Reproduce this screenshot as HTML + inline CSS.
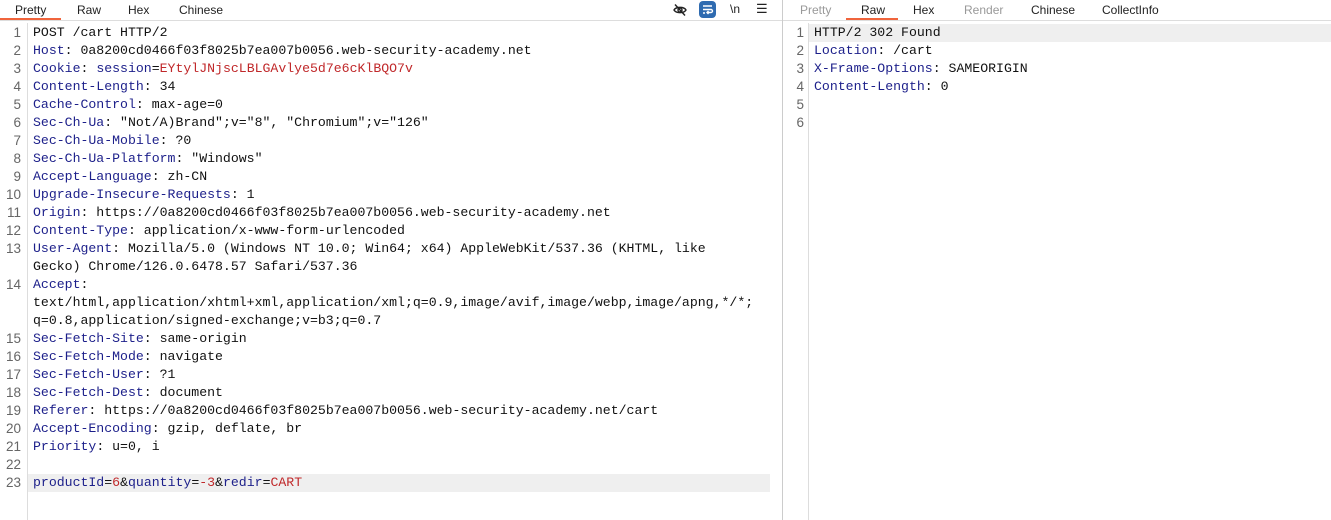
<!DOCTYPE html>
<html><head><meta charset="utf-8"><style>
*{margin:0;padding:0;box-sizing:border-box}
body{width:1331px;height:520px;background:#fff;position:relative;overflow:hidden;font-family:"Liberation Sans",sans-serif}
.tabs{position:absolute;top:0;height:21px;border-bottom:1px solid #ddd;font-size:12px}
.tab{position:absolute;top:3px;color:#222}
.tab.g{color:#999}
.ul{position:absolute;top:18px;height:2px;background:#f0643c}
.code{position:absolute;font-family:"Liberation Mono",monospace;font-size:13.2px;line-height:18px;color:#111;white-space:pre}
.k{color:#1c1f8a}.r{color:#c0282a}
.num{position:absolute;font-family:"Liberation Sans",sans-serif;font-size:13.5px;color:#666;line-height:18px;text-align:right}
.vl{position:absolute;width:1px;background:#ddd}
</style></head><body>
<div class="tabs" style="left:0;width:782px">
<span class="tab" style="left:15px">Pretty</span>
<span class="tab" style="left:77px">Raw</span>
<span class="tab" style="left:128px">Hex</span>
<span class="tab" style="left:179px">Chinese</span>
<div class="ul" style="left:0;width:61px"></div>
<svg style="position:absolute;left:673px;top:3px" width="14" height="14" viewBox="0 0 14 14" fill="none" stroke="#222" stroke-width="1.4"><path d="M1 7c2-3.5 10-3.5 12 0c-2 3.5-10 3.5-12 0z"/><circle cx="7" cy="7" r="2"/><path d="M2 1.5l10 11"/></svg>
<div style="position:absolute;left:699px;top:1px;width:17px;height:17px;border-radius:4px;background:#2f6bb0"><svg width="17" height="17" viewBox="0 0 17 17" fill="none" stroke="#fff" stroke-width="1.4"><path d="M4 5h9M4 8.5h8a1.5 1.5 0 0 1 0 3H8M9.5 10l-1.5 1.5 1.5 1.5M4 12h2"/></svg></div>
<span class="tab" style="left:730px;top:2px;font-size:12px">\n</span>
<span class="tab" style="left:756px;top:1px;font-size:13px">☰</span>
</div>
<div class="vl" style="left:782px;top:0;height:520px;background:#ccc"></div>
<div class="tabs" style="left:783px;width:548px">
<span class="tab g" style="left:17px">Pretty</span>
<span class="tab" style="left:78px">Raw</span>
<span class="tab" style="left:130px">Hex</span>
<span class="tab g" style="left:181px">Render</span>
<span class="tab" style="left:248px">Chinese</span>
<span class="tab" style="left:319px">CollectInfo</span>
<div class="ul" style="left:63px;width:52px"></div>
</div>
<div class="vl" style="left:27px;top:23px;height:497px"></div>
<div class="vl" style="left:808px;top:23px;height:497px"></div>
<div style="position:absolute;left:28px;top:474px;width:742px;height:18px;background:#efefef"></div>
<div style="position:absolute;left:809px;top:24px;width:522px;height:18px;background:#efefef"></div>
<div class="num" style="left:0;top:24px;width:21px">1<br>2<br>3<br>4<br>5<br>6<br>7<br>8<br>9<br>10<br>11<br>12<br>13<br><br>14<br><br><br>15<br>16<br>17<br>18<br>19<br>20<br>21<br>22<br>23</div>
<div class="code" style="left:33px;top:24px">POST /cart HTTP/2
<span class="k">Host</span>: 0a8200cd0466f03f8025b7ea007b0056.web-security-academy.net
<span class="k">Cookie</span>: <span class="k">session</span>=<span class="r">EYtylJNjscLBLGAvlye5d7e6cKlBQO7v</span>
<span class="k">Content-Length</span>: 34
<span class="k">Cache-Control</span>: max-age=0
<span class="k">Sec-Ch-Ua</span>: "Not/A)Brand";v="8", "Chromium";v="126"
<span class="k">Sec-Ch-Ua-Mobile</span>: ?0
<span class="k">Sec-Ch-Ua-Platform</span>: "Windows"
<span class="k">Accept-Language</span>: zh-CN
<span class="k">Upgrade-Insecure-Requests</span>: 1
<span class="k">Origin</span>: https://0a8200cd0466f03f8025b7ea007b0056.web-security-academy.net
<span class="k">Content-Type</span>: application/x-www-form-urlencoded
<span class="k">User-Agent</span>: Mozilla/5.0 (Windows NT 10.0; Win64; x64) AppleWebKit/537.36 (KHTML, like
Gecko) Chrome/126.0.6478.57 Safari/537.36
<span class="k">Accept</span>:
text/html,application/xhtml+xml,application/xml;q=0.9,image/avif,image/webp,image/apng,*/*;
q=0.8,application/signed-exchange;v=b3;q=0.7
<span class="k">Sec-Fetch-Site</span>: same-origin
<span class="k">Sec-Fetch-Mode</span>: navigate
<span class="k">Sec-Fetch-User</span>: ?1
<span class="k">Sec-Fetch-Dest</span>: document
<span class="k">Referer</span>: https://0a8200cd0466f03f8025b7ea007b0056.web-security-academy.net/cart
<span class="k">Accept-Encoding</span>: gzip, deflate, br
<span class="k">Priority</span>: u=0, i

<span class="k">productId</span>=<span class="r">6</span>&amp;<span class="k">quantity</span>=<span class="r">-3</span>&amp;<span class="k">redir</span>=<span class="r">CART</span></div>
<div class="num" style="left:783px;top:24px;width:21px">1<br>2<br>3<br>4<br>5<br>6</div>
<div class="code" style="left:814px;top:24px">HTTP/2 302 Found
<span class="k">Location</span>: /cart
<span class="k">X-Frame-Options</span>: SAMEORIGIN
<span class="k">Content-Length</span>: 0</div>
</body></html>
